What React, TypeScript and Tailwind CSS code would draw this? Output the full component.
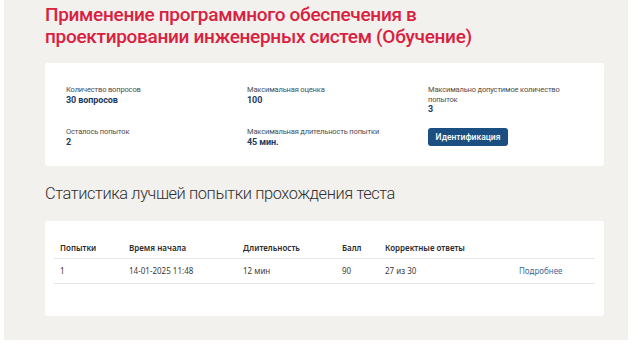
const FONT = { fontFamily: '"Noto Sans", "Open Sans", sans-serif' };
const NARROW = { fontFamily: 'Roboto, "Noto Sans", sans-serif' };

const COLS = ["Попытки", "Время начала", "Длительность", "Балл", "Корректные ответы"];

function Info({ label, value, wrap }: { label: string; value: string; wrap?: boolean }) {
  return (
    <div style={NARROW}>
      <p
        className={
          "text-[7.5px] leading-[9.5px] tracking-[-0.15px] text-[#4d4d4d]" +
          (wrap ? " max-w-[136px]" : "")
        }
      >
        {label}
      </p>
      <p className="text-[9px] font-bold leading-[11px] tracking-[-0.1px] text-[#1d3b5e]">{value}</p>
    </div>
  );
}

export default function App() {
  return (
    <div className="h-[347px] w-[633px] bg-white" style={FONT}>
      <div className="ml-[4px] h-[340px] w-[624px] bg-[#f2f1ee] pl-[41px] pr-[24px] pt-[4px]">
        <h1
          className="text-[19px] font-medium leading-[22px] tracking-[-0.3px] text-[#d9213f]"
          style={NARROW}
        >
          Применение программного обеспечения в
          <br />
          проектировании инженерных систем (Обучение)
        </h1>

        <div className="mt-[15px] h-[103px] rounded-[3px] bg-white pl-[21px] pt-[22px]">
          <div className="grid grid-cols-[181px_181px_1fr] gap-y-[12px]">
            <Info label="Количество вопросов" value="30 вопросов" />
            <Info label="Максимальная оценка" value="100" />
            <Info label="Максимально допустимое количество попыток" value="3" wrap />
            <Info label="Осталось попыток" value="2" />
            <Info label="Максимальная длительность попытки" value="45 мин." />
            <div className="-mt-[5px]">
              <button
                className="h-[18px] w-[80px] rounded-[3px] bg-[#1c4f81] text-[8.5px] font-medium text-white"
                style={NARROW}
              >
                Идентификация
              </button>
            </div>
          </div>
        </div>

        <h2
          className="mt-[17px] text-[16.4px] font-light leading-[22px] tracking-[-0.4px] text-[#2f2f2f]"
          style={NARROW}
        >
          Статистика лучшей попытки прохождения теста
        </h2>

        <div className="mt-[16px] h-[95px] rounded-[3px] bg-white px-[9px] pt-[17px]">
          <div className="grid grid-cols-[69px_114px_99px_43px_134px_1fr] border-b border-[#e6e6e6] pl-[6px] text-[8px] font-semibold leading-[16px] text-[#2b2b2b]">
            {COLS.map((c) => (
              <span key={c} className="py-[2px]">{c}</span>
            ))}
            <span />
          </div>
          <div className="grid grid-cols-[69px_114px_99px_43px_134px_1fr] border-b border-[#e6e6e6] pl-[6px] text-[8px] leading-[16px] text-[#3a3a3a]">
            <span className="py-[4px]">1</span>
            <span className="py-[4px]">14-01-2025 11:48</span>
            <span className="py-[4px]">12 мин</span>
            <span className="py-[4px]">90</span>
            <span className="py-[4px]">27 из 30</span>
            <span className="py-[4px] text-[#3d6a9a]">Подробнее</span>
          </div>
        </div>
      </div>
    </div>
  );
}
